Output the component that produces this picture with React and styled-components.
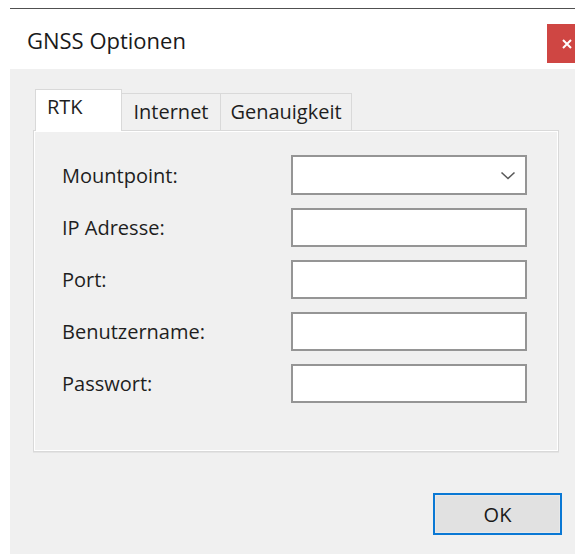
import React from "react";
import styled, { createGlobalStyle } from "styled-components";

const GlobalStyle = createGlobalStyle`
  html, body {
    margin: 0;
    padding: 0;
    background: #ffffff;
    overflow: hidden;
    font-family: "Open Sans", "Noto Sans", Arial, sans-serif;
    color: #1e1e1e;
  }
`;

const Page = styled.div`
  padding: 8px 0 0 10px;
`;

const Window = styled.div`
  width: 590px;
  height: 545px;
  border-top: 1px solid #505050;
  display: flex;
  flex-direction: column;
  background: #ffffff;
`;

const TitleBar = styled.div`
  height: 60px;
  flex: none;
  display: flex;
  justify-content: space-between;
  align-items: flex-start;
  padding-left: 17px;
  background: #ffffff;
`;

const Title = styled.div`
  font-size: 22px;
  line-height: 30px;
  margin-top: 16px;
  color: #1a1a1a;
`;

const CloseButton = styled.button`
  width: 40px;
  height: 39px;
  margin: 15px 13px 0 0;
  border: none;
  padding: 0;
  background: #cf4643;
  display: flex;
  align-items: center;
  justify-content: center;
`;

const Body = styled.div`
  flex: 1;
  background: #f0f0f0;
  padding: 20px 0 0 23px;
  display: flex;
  flex-direction: column;
`;

const TabStrip = styled.div`
  display: flex;
  align-items: flex-end;
  height: 41px;
  padding-left: 2px;
`;

const Tab = styled.div`
  position: relative;
  z-index: 1;
  box-sizing: border-box;
  width: ${(p) => p.$w}px;
  height: ${(p) => (p.$active ? 42 : 37)}px;
  margin-bottom: ${(p) => (p.$active ? -1 : 0)}px;
  margin-left: ${(p) => (p.$first ? 0 : -1)}px;
  padding: ${(p) => (p.$active ? "3px 0 0 11px" : "4px 0 0 0")};
  display: flex;
  justify-content: ${(p) => (p.$active ? "flex-start" : "center")};
  border: 1px solid #d9d9d9;
  border-bottom: none;
  background: ${(p) => (p.$active ? "#ffffff" : "#f0f0f0")};
  font-size: 20px;
  line-height: 27px;
  color: #1e1e1e;
`;

const Panel = styled.div`
  box-sizing: border-box;
  width: 526px;
  height: 322px;
  border: 1px solid #d9d9d9;
  box-shadow: inset 0 0 0 1px #ffffff, 0 1px 0 #e4e4e4;
  background: #f0f0f0;
  padding: 24px 0 0 28px;
`;

const Form = styled.div`
  display: grid;
  grid-template-columns: 229px 236px;
  grid-template-rows: 40px repeat(4, 39px);
  row-gap: 13px;
  align-items: center;
`;

const Label = styled.label`
  font-size: 20px;
  line-height: 27px;
  color: #1e1e1e;
`;

const Field = styled.div`
  box-sizing: border-box;
  height: 100%;
  border: 2px solid #959595;
  background: #ffffff;
  display: flex;
  align-items: center;
  justify-content: flex-end;
  padding-right: 9px;
`;

const Footer = styled.div`
  display: flex;
  justify-content: flex-end;
  padding-right: 38px;
  margin-top: 41px;
`;

const OkButton = styled.button`
  box-sizing: border-box;
  width: 129px;
  height: 42px;
  border: 2px solid #0a78d4;
  box-shadow: inset 0 0 0 1px #e8e8e8;
  background: #e1e1e1;
  font-family: inherit;
  font-size: 20px;
  color: #1a1a1a;
  padding: 0;
`;

const Chevron = () => (
  <svg width="16" height="9" viewBox="0 0 16 9">
    <polyline
      points="1.5,1.5 8,7.5 14.5,1.5"
      fill="none"
      stroke="#5a5a5a"
      strokeWidth="1.6"
    />
  </svg>
);

const CloseIcon = () => (
  <svg width="10" height="10" viewBox="0 0 10 10">
    <path d="M1 1 L9 9 M9 1 L1 9" stroke="#ffffff" strokeWidth="2" />
  </svg>
);

const tabs = [
  { name: "RTK", w: 87 },
  { name: "Internet", w: 100 },
  { name: "Genauigkeit", w: 132 },
];

const fields = ["IP Adresse:", "Port:", "Benutzername:", "Passwort:"];

export default function App() {
  return (
    <>
      <GlobalStyle />
      <Page>
        <Window>
          <TitleBar>
            <Title>GNSS Optionen</Title>
            <CloseButton aria-label="Schließen">
              <CloseIcon />
            </CloseButton>
          </TitleBar>
          <Body>
            <TabStrip>
              {tabs.map((t, i) => (
                <Tab key={t.name} $w={t.w} $active={i === 0} $first={i === 0}>
                  {t.name}
                </Tab>
              ))}
            </TabStrip>
            <Panel>
              <Form>
                <Label>Mountpoint:</Label>
                <Field>
                  <Chevron />
                </Field>
                {fields.map((f) => (
                  <React.Fragment key={f}>
                    <Label>{f}</Label>
                    <Field />
                  </React.Fragment>
                ))}
              </Form>
            </Panel>
            <Footer>
              <OkButton>OK</OkButton>
            </Footer>
          </Body>
        </Window>
      </Page>
    </>
  );
}
